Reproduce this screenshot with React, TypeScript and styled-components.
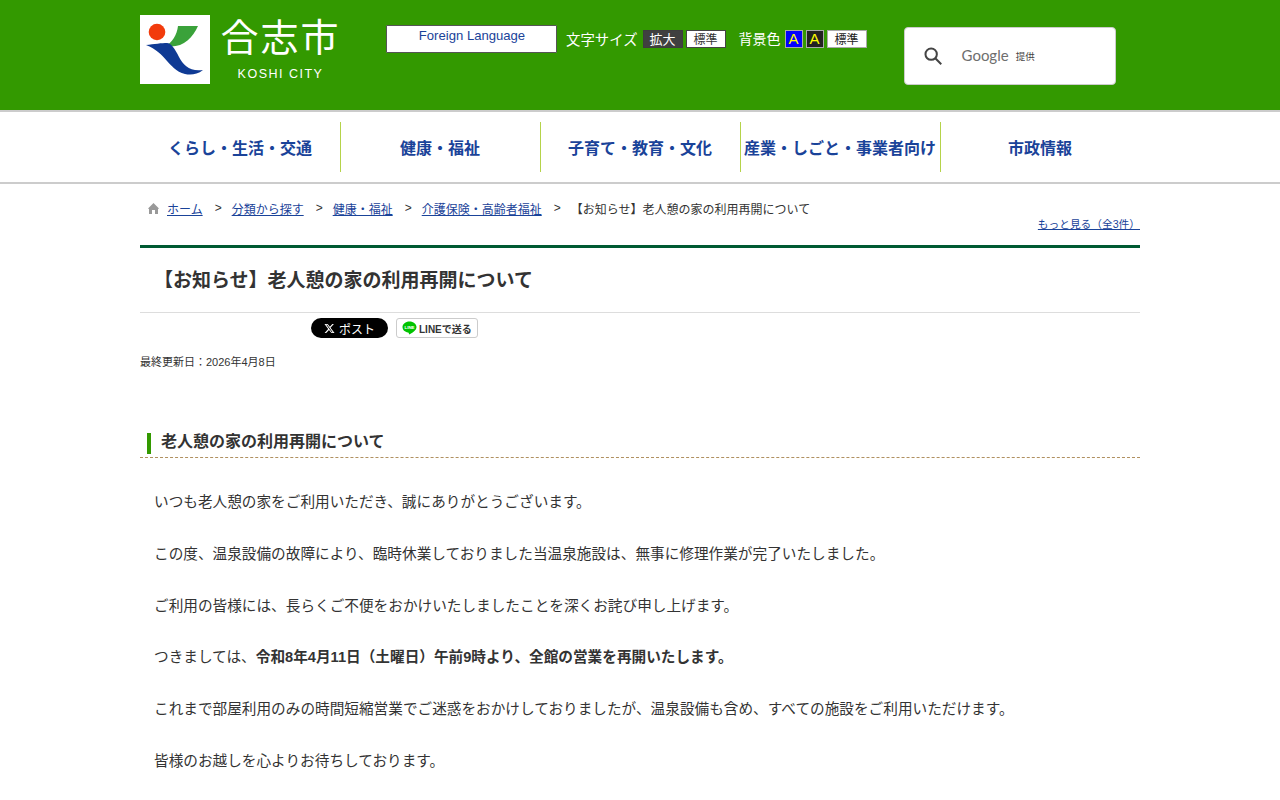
import React from "react";
import styled, { createGlobalStyle } from "styled-components";

const Global = createGlobalStyle`
  html, body { margin: 0; padding: 0; background: #fff; }
  body { font-family: "Liberation Sans", "Noto Sans CJK JP", sans-serif; color: #333; overflow: hidden; height: 800px; }
  a { color: #1a4399; }
`;

const Header = styled.header`
  background: #339900;
  height: 110px;
`;
const HeaderInner = styled.div`
  width: 1000px;
  margin: 0 auto;
  display: flex;
  align-items: flex-start;
`;
const Logo = styled.div`
  display: flex;
  margin-top: 15px;
  width: 246px;
`;
const LogoMark = styled.svg`
  width: 70px;
  height: 69px;
  display: block;
`;
const LogoText = styled.div`
  margin-left: 13px;
  color: #fff;
  display: flex;
  flex-direction: column;
  align-items: center;
  width: 115px;
`;
const LogoKanji = styled.div`
  font-size: 38px;
  line-height: 46px;
  font-weight: 400;
  letter-spacing: 2px;
  white-space: nowrap;
`;
const LogoLatin = styled.div`
  font-size: 12.5px;
  line-height: 16px;
  letter-spacing: 1.5px;
  margin-top: 5px;
  white-space: nowrap;
`;
const Foreign = styled.div`
  width: 171px;
  height: 28px;
  margin-top: 25px;
  box-sizing: border-box;
  background: #fff;
  border: 1px solid #555;
  border-radius: 1px;
  color: #1a4399;
  font-size: 13.1px;
  line-height: 20px;
  text-align: center;
  padding-left: 1px;
`;
const Controls = styled.div`
  display: flex;
  align-items: center;
  margin-top: 29px;
  margin-left: 9px;
  height: 20px;
`;
const ControlLabel = styled.span<{ $gap?: number; $size?: number; $after?: number }>`
  color: #fff;
  font-size: ${(p) => p.$size ?? 14.4}px;
  margin-left: ${(p) => p.$gap ?? 0}px;
  margin-right: ${(p) => p.$after ?? 4}px;
  white-space: nowrap;
  position: relative;
  top: -1px;
`;
const SizeButton = styled.span<{ $dark?: boolean }>`
  display: block;
  width: 40px;
  height: 18px;
  box-sizing: border-box;
  margin-right: 3px;
  border: 1px solid ${(p) => (p.$dark ? "#3d3d3d" : "#444")};
  background: ${(p) => (p.$dark ? "#404040" : "#fff")};
  color: ${(p) => (p.$dark ? "#fff" : "#333")};
  font-size: ${(p) => (p.$dark ? 13 : 12)}px;
  line-height: 18px;
  text-align: center;
`;
const ColorButton = styled.span<{ $bg: string; $fg: string; $wide?: boolean }>`
  display: block;
  width: ${(p) => (p.$wide ? 40 : 18)}px;
  height: 18px;
  box-sizing: border-box;
  margin-right: 3px;
  border: 1px solid #aaa;
  background: ${(p) => p.$bg};
  color: ${(p) => p.$fg};
  font-size: ${(p) => (p.$wide ? 12 : 15)}px;
  line-height: ${(p) => (p.$wide ? 18 : 16)}px;
  text-align: center;
`;
const Search = styled.div`
  width: 212px;
  height: 58px;
  box-sizing: border-box;
  margin-top: 27px;
  margin-left: 34px;
  background: #fff;
  border: 1px solid #ccc;
  border-radius: 4px;
  display: flex;
  align-items: center;
  padding-left: 17px;
`;
const GoogleWord = styled.span`
  font-family: "Lato", sans-serif;
  font-size: 15px;
  color: #6e6e6e;
  margin-left: 18px;
  position: relative;
  top: -1px;
`;
const GoogleNote = styled.span`
  font-size: 9.5px;
  color: #444;
  margin-left: 7px;
`;

const Nav = styled.nav`
  height: 74px;
  box-sizing: border-box;
  border-top: 2px solid #ccc;
  border-bottom: 2px solid #ccc;
  display: flex;
  justify-content: center;
  align-items: center;
`;
const NavList = styled.div`
  width: 1000px;
  display: flex;
  height: 50px;
`;
const NavItem = styled.a<{ $first?: boolean }>`
  width: 200px;
  box-sizing: border-box;
  border-left: ${(p) => (p.$first ? "none" : "1px solid #b5d34a")};
  padding-right: ${(p) => (p.$first ? 0 : 1)}px;
  display: flex;
  align-items: center;
  justify-content: center;
  color: #1a4399;
  font-size: 16px;
  font-weight: 700;
  white-space: nowrap;
`;

const Main = styled.main`
  width: 1000px;
  margin: 0 auto;
`;
const Crumbs = styled.div`
  display: flex;
  align-items: center;
  height: 18px;
  margin-top: 15px;
  padding-left: 7px;
  font-size: 12px;
  color: #333;
  white-space: nowrap;
`;
const HomeIcon = styled.svg`
  width: 13px;
  height: 13px;
  margin-right: 7px;
`;
const Sep = styled.span`
  margin: 0 10px 0 12px;
`;
const More = styled.div`
  text-align: right;
  font-size: 10.7px;
  line-height: 14px;
  height: 14px;
`;
const Title = styled.h1`
  margin: 14px 0 0;
  border-top: 3px solid #005a32;
  border-bottom: 1px solid #ddd;
  height: 64px;
  box-sizing: content-box;
  padding-left: 14px;
  font-size: 19px;
  line-height: 66px;
  font-weight: 700;
  color: #333;
`;
const Social = styled.div`
  display: flex;
  align-items: center;
  gap: 8px;
  padding-left: 171px;
  margin-top: 5px;
  height: 20px;
`;
const PostButton = styled.span`
  width: 77px;
  height: 20px;
  border-radius: 10px;
  background: #000;
  color: #fff;
  font-size: 12px;
  display: flex;
  align-items: center;
  justify-content: center;
  gap: 4px;
`;
const LineButton = styled.span`
  width: 82px;
  height: 20px;
  box-sizing: border-box;
  border: 1px solid #ccc;
  border-radius: 3px;
  background: #fff;
  display: flex;
  align-items: center;
  padding-left: 5px;
  gap: 2px;
  font-size: 10px;
  font-weight: 700;
  color: #333;
  white-space: nowrap;
`;
const Updated = styled.p`
  margin: 16px 0 0;
  font-size: 11px;
  line-height: 16px;
  color: #333;
`;
const Heading = styled.h2`
  margin: 59px 0 0;
  border-bottom: 1px dashed #b09060;
  height: 28px;
  padding-left: 7px;
  display: flex;
  font-size: 16px;
  font-weight: 700;
  color: #333;
`;
const HeadingBar = styled.span`
  display: block;
  border-left: 4px solid #339900;
  height: 21px;
  margin-top: 4px;
  padding-left: 10px;
  line-height: 18px;
`;
const Body = styled.div`
  padding: 32px 14px 0;
`;
const Para = styled.p`
  margin: 0 0 25.92px;
  font-size: 14.65px;
  line-height: 25.92px;
  white-space: nowrap;
  color: #333;
`;

export default function App() {
  return (
    <div lang="ja">
      <Global />
      <Header>
        <HeaderInner>
          <Logo>
            <LogoMark viewBox="0 0 70 69">
              <rect width="70" height="69" fill="#fff" />
              <circle cx="17" cy="17" r="8.3" fill="#f23b0c" />
              <path d="M25 31 C32 28 37 20 38 11 L58 11 C52 24 42 34 25 31 Z" fill="#3aa23a" />
              <path d="M6 30 C14 29 22 28 27 28 C31 28 35 34 39 42 C43 50 50 57 63 55 C57 60 50 60 45 59 C36 57 31 50 27 46 C22 40 16 34 6 30 Z" fill="#0f3a94" />
            </LogoMark>
            <LogoText>
              <LogoKanji>合志市</LogoKanji>
              <LogoLatin>KOSHI CITY</LogoLatin>
            </LogoText>
          </Logo>
          <Foreign>Foreign Language</Foreign>
          <Controls>
            <ControlLabel $after={5}>文字サイズ</ControlLabel>
            <SizeButton $dark>拡大</SizeButton>
            <SizeButton>標準</SizeButton>
            <ControlLabel $gap={10} $size={14}>背景色</ControlLabel>
            <ColorButton $bg="#0000ff" $fg="#ffff00">A</ColorButton>
            <ColorButton $bg="#222" $fg="#ffff00">A</ColorButton>
            <ColorButton $bg="#fff" $fg="#222" $wide>標準</ColorButton>
          </Controls>
          <Search>
            <svg width="22" height="22" viewBox="0 0 24 24" fill="none" stroke="#444" strokeWidth="2.2">
              <circle cx="10" cy="10" r="6.2" />
              <path d="M14.5 14.5 L21 21" />
            </svg>
            <GoogleWord>Google</GoogleWord>
            <GoogleNote>提供</GoogleNote>
          </Search>
        </HeaderInner>
      </Header>
      <Nav>
        <NavList>
          <NavItem $first>くらし・生活・交通</NavItem>
          <NavItem>健康・福祉</NavItem>
          <NavItem>子育て・教育・文化</NavItem>
          <NavItem>産業・しごと・事業者向け</NavItem>
          <NavItem>市政情報</NavItem>
        </NavList>
      </Nav>
      <Main>
        <Crumbs>
          <HomeIcon viewBox="0 0 13 13">
            <path d="M6.5 1 L12 6.5 L11 7 L11 12 L8 12 L8 8 L5 8 L5 12 L2 12 L2 7 L1 6.5 Z" fill="#999" />
          </HomeIcon>
          <a href="#">ホーム</a>
          <Sep>&gt;</Sep>
          <a href="#">分類から探す</a>
          <Sep>&gt;</Sep>
          <a href="#">健康・福祉</a>
          <Sep>&gt;</Sep>
          <a href="#">介護保険・高齢者福祉</a>
          <Sep>&gt;</Sep>
          <span>【お知らせ】老人憩の家の利用再開について</span>
        </Crumbs>
        <More><a href="#">もっと見る（全3件）</a></More>
        <Title>【お知らせ】老人憩の家の利用再開について</Title>
        <Social>
          <PostButton>
            <svg width="11" height="11" viewBox="0 0 24 24" fill="#fff">
              <path d="M18.2 2h3.4l-7.4 8.5L23 22h-6.8l-5.3-7-6.1 7H1.3l7.9-9L1 2h7l4.8 6.4L18.2 2zm-1.2 18h1.9L7 3.9H5L17 20z" />
            </svg>
            ポスト
          </PostButton>
          <LineButton>
            <svg width="15" height="14" viewBox="0 0 15 14">
              <path d="M7.5 0.5 C11.5 0.5 14.5 3 14.5 6 C14.5 9.5 10 12 7 13.5 C7 12 6.8 11.5 6 11.4 C3 11 0.5 9 0.5 6 C0.5 3 3.5 0.5 7.5 0.5 Z" fill="#00c300" />
              <text x="7.5" y="7.8" textAnchor="middle" fontSize="4.4" fontWeight="700" fill="#fff">LINE</text>
            </svg>
            LINEで送る
          </LineButton>
        </Social>
        <Updated>最終更新日：2026年4月8日</Updated>
        <Heading><HeadingBar>老人憩の家の利用再開について</HeadingBar></Heading>
        <Body>
          <Para>いつも老人憩の家をご利用いただき、誠にありがとうございます。</Para>
          <Para>この度、温泉設備の故障により、臨時休業しておりました当温泉施設は、無事に修理作業が完了いたしました。</Para>
          <Para>ご利用の皆様には、長らくご不便をおかけいたしましたことを深くお詫び申し上げます。</Para>
          <Para>つきましては、<strong>令和8年4月11日（土曜日）午前9時より、全館の営業を再開いたします。</strong></Para>
          <Para>これまで部屋利用のみの時間短縮営業でご迷惑をおかけしておりましたが、温泉設備も含め、すべての施設をご利用いただけます。</Para>
          <Para>皆様のお越しを心よりお待ちしております。</Para>
        </Body>
      </Main>
    </div>
  );
}
